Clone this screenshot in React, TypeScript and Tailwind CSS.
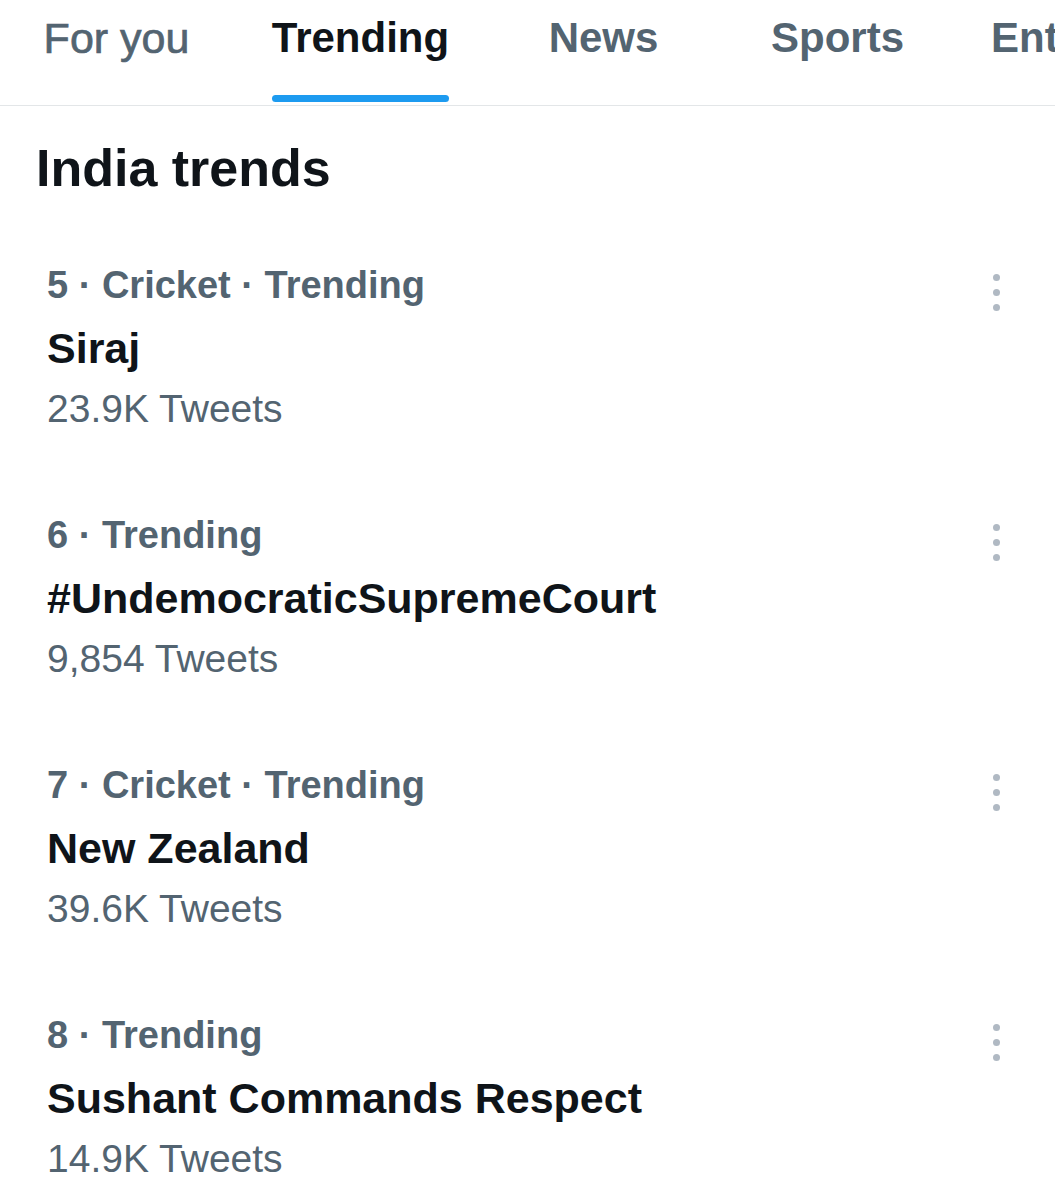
import React from "react";

const trends = [
  { meta: "5 · Cricket · Trending", title: "Siraj", count: "23.9K Tweets" },
  { meta: "6 · Trending", title: "#UndemocraticSupremeCourt", count: "9,854 Tweets" },
  { meta: "7 · Cricket · Trending", title: "New Zealand", count: "39.6K Tweets" },
  { meta: "8 · Trending", title: "Sushant Commands Respect", count: "14.9K Tweets" },
];

function Dots() {
  return (
    <div className="flex flex-col items-center gap-[8px] pt-[19px]">
      <span className="block h-[7px] w-[7px] rounded-full bg-[#b0b9c3]" />
      <span className="block h-[7px] w-[7px] rounded-full bg-[#b0b9c3]" />
      <span className="block h-[7px] w-[7px] rounded-full bg-[#b0b9c3]" />
    </div>
  );
}

export default function App() {
  return (
    <div
      className="w-[1055px] h-[1200px] overflow-hidden bg-white"
      style={{ fontFamily: '"Liberation Sans", Arial, sans-serif' }}
    >
      {/* Tabs */}
      <div className="flex h-[106px] border-b border-[#e3e6e8] whitespace-nowrap">
        <div className="w-[233px] shrink-0 flex justify-center">
          <span className="pt-[8px] text-[43px] leading-[60px] text-[#536471] [-webkit-text-stroke:0.7px_#536471]">
            For you
          </span>
        </div>
        <div className="w-[255px] shrink-0 flex justify-center">
          <div className="flex flex-col items-stretch">
            <span className="pt-[8px] text-[42px] leading-[60px] font-bold text-[#0f1419]">
              Trending
            </span>
            <span className="mt-[27px] block h-[7px] rounded-full bg-[#1d9bf0]" />
          </div>
        </div>
        <div className="w-[231px] shrink-0 flex justify-center">
          <span className="pt-[8px] text-[42px] leading-[60px] font-bold text-[#536471]">News</span>
        </div>
        <div className="w-[237px] shrink-0 flex justify-center">
          <span className="pt-[8px] text-[42px] leading-[60px] font-bold text-[#536471]">Sports</span>
        </div>
        <div className="shrink-0 pl-[35px]">
          <span className="block pt-[8px] text-[42px] leading-[60px] font-bold text-[#536471]">
            Entertainment
          </span>
        </div>
      </div>

      {/* Heading */}
      <div className="pl-[36px] pt-[32px]">
        <h1 className="text-[52px] leading-[60px] font-bold text-[#0f1419]">India trends</h1>
      </div>

      {/* Trends */}
      <div className="pt-[57px] flex flex-col">
        {trends.map((t) => (
          <div key={t.title} className="flex h-[250px] pl-[47px] pr-[55px] justify-between">
            <div className="flex flex-col whitespace-nowrap">
              <span className="text-[38px] leading-[60px] font-bold text-[#536471]">{t.meta}</span>
              <span className="mt-[3px] text-[43px] leading-[60px] font-bold text-[#0f1419]">{t.title}</span>
              <span className="mt-[1px] text-[39px] leading-[60px] text-[#536471]">{t.count}</span>
            </div>
            <Dots />
          </div>
        ))}
      </div>
    </div>
  );
}
